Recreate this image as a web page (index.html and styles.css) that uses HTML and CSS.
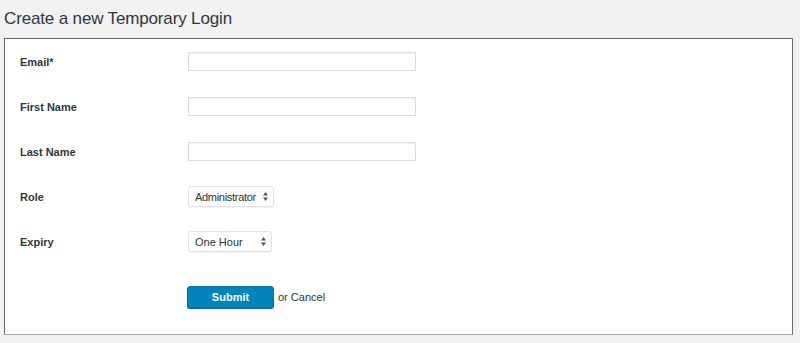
FILE: index.html
```html
<!DOCTYPE html>
<html lang="en">
<head>
    <meta charset="UTF-8">
    <meta name="viewport" content="width=device-width, initial-scale=1.0">
    <title>Create a new Temporary Login</title>
    <link rel="stylesheet" href="styles.css">
</head>
<body>
    <h2 class="page-title">Create a new Temporary Login</h2>

    <div class="login-box">
        <form class="login-form">
            <div class="form-row">
                <label class="form-label" for="email">Email*</label>
                <input class="text-input" type="text" id="email">
            </div>
            <div class="form-row">
                <label class="form-label" for="firstName">First Name</label>
                <input class="text-input" type="text" id="firstName">
            </div>
            <div class="form-row">
                <label class="form-label" for="lastName">Last Name</label>
                <input class="text-input" type="text" id="lastName">
            </div>
            <div class="form-row">
                <label class="form-label">Role</label>
                <div class="select-box role-select">
                    <span class="select-value">Administrator</span>
                    <svg class="select-arrows" width="5" height="9" viewBox="0 0 5 9"><path d="M2.5 0L5 3.5H0z M2.5 9L0 5.5H5z" fill="#555"/></svg>
                </div>
            </div>
            <div class="form-row">
                <label class="form-label">Expiry</label>
                <div class="select-box expiry-select">
                    <span class="select-value">One Hour</span>
                    <svg class="select-arrows" width="5" height="9" viewBox="0 0 5 9"><path d="M2.5 0L5 3.5H0z M2.5 9L0 5.5H5z" fill="#555"/></svg>
                </div>
            </div>
            <div class="form-row submit-row">
                <span class="form-label"></span>
                <div class="actions">
                    <button class="button submit-button" type="button">Submit</button>
                    <span class="cancel-text">or <a class="cancel-link" href="#">Cancel</a></span>
                </div>
            </div>
        </form>
    </div>
</body>
</html>
```

FILE: styles.css
```css
:root {
    --background: #f1f1f1;
    --foreground: #23282d;
    --border: #dddddd;
    --primary: #0085ba;
}

body {
    margin: 0;
    padding: 0 7px 0 4px;
    background-color: var(--background);
    color: var(--foreground);
    font-family: "Liberation Sans", Arial, sans-serif;
}

.page-title {
    margin: 0;
    padding-top: 9px;
    height: 29px;
    font-size: 17px;
    font-weight: 400;
    letter-spacing: -0.15px;
    line-height: 20px;
    color: #32373c;
}

.login-box {
    background: #fff;
    border: 1px solid #6a6a6a;
    border-bottom-color: #b0b0b0;
    height: 297px;
    box-sizing: border-box;
}

.login-form {
    padding: 0 0 0 15px;
}

.form-row {
    display: flex;
    align-items: center;
    height: 45px;
}

.form-label {
    width: 168px;
    font-size: 11px;
    font-weight: bold;
    color: #32373c;
}

.text-input {
    width: 228px;
    height: 19px;
    box-sizing: border-box;
    margin: 0;
    padding: 0 4px;
    border: 1px solid var(--border);
    box-shadow: inset 0 1px 2px rgba(0,0,0,0.07);
    font-size: 12px;
}

.select-box {
    display: flex;
    align-items: center;
    justify-content: space-between;
    height: 21px;
    box-sizing: border-box;
    padding: 0 5px 0 6px;
    border: 1px solid #e2e2e2;
    border-radius: 3px;
    box-shadow: 0 1px 1px rgba(0,0,0,0.06);
    font-size: 11px;
    color: #333;
    background: #fff;
}

.role-select {
    width: 86px;
}

.role-select .select-value {
    letter-spacing: -0.3px;
}

.expiry-select {
    width: 84px;
}

.submit-row {
    height: 66px;
}

.actions {
    display: flex;
    align-items: center;
    gap: 4px;
}

.button {
    width: 87px;
    height: 22px;
    margin-left: -1px;
    border: 1px solid #0073aa;
    border-radius: 3px;
    font-family: inherit;
    font-size: 11px;
    font-weight: bold;
    cursor: pointer;
}

.submit-button {
    background-color: var(--primary);
    color: white;
    box-shadow: 0 1px 0 #006799;
}

.cancel-text {
    font-size: 11px;
    color: #333;
}

.cancel-link {
    color: #333;
    text-decoration: none;
}
```
